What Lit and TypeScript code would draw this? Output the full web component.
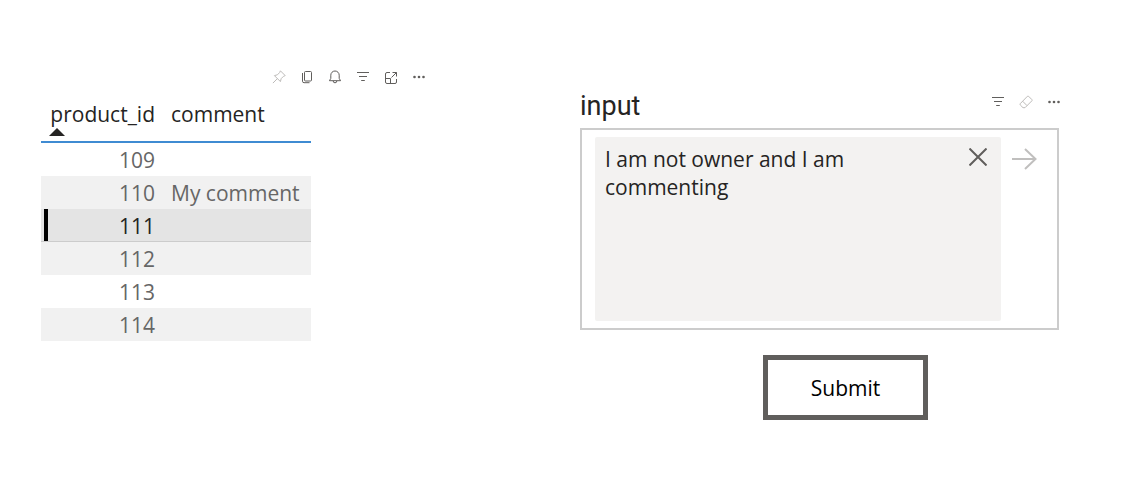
import { LitElement, html, css, svg } from "lit";
import { customElement, property, state } from "lit/decorators.js";
import { classMap } from "lit/directives/class-map.js";

const icons = {
  pin: svg`<path d="M8.4 .8 13.2 5.6 11.4 6.4 9.2 8.6 8.4 11.6 2.4 5.6 5.4 4.8 7.6 2.6ZM5.4 8.6 .9 13.1"/>`,
  copy: svg`<rect x="4.5" y="1.5" width="7" height="9.5" rx="1"/><path d="M2.5 3V11.2Q2.5 12.7 4 12.7H9.5"/>`,
  bell: svg`<path d="M1.4 10.7H12.6L11.2 8.4V5.2A4.2 4.2 0 0 0 2.8 5.2V8.4ZM5.2 11A1.8 1.8 0 0 0 8.8 11"/>`,
  filter: svg`<path d="M1 2.5H13M3 6.5H11M5.2 10.5H8.8"/>`,
  focus: svg`<path d="M6 2.5H3Q1.5 2.5 1.5 4V12Q1.5 13.5 3 13.5H11Q12.5 13.5 12.5 12V9M8.5 2.5H12.5V6.5M12.5 2.5 7.5 7.5M1.5 8.5H6.5V13.5"/>`,
  more: svg`<g fill="currentColor" stroke="none"><circle cx="2.5" cy="7" r="1.3"/><circle cx="7" cy="7" r="1.3"/><circle cx="11.5" cy="7" r="1.3"/></g>`,
  eraser: svg`<path d="M8.4 1.3Q9 .8 9.6 1.3L12.9 4.6Q13.4 5.2 12.9 5.8L6 12.7H4L1.3 10Q.8 9.4 1.3 8.6ZM3.6 6.2 8 10.6"/>`,
};
type IconName = keyof typeof icons;

interface Tool {
  icon: IconName;
  label: string;
  faded?: boolean;
}

@customElement("visual-toolbar")
export class VisualToolbar extends LitElement {
  @property({ attribute: false }) tools: Tool[] = [];

  static styles = css`
    :host {
      display: flex;
      gap: 14px;
    }
    button {
      display: block;
      width: 14px;
      height: 14px;
      padding: 0;
      border: 0;
      background: none;
      color: #605e5c;
      cursor: pointer;
    }
    .faded {
      color: #bdbbb9;
    }
    svg {
      display: block;
      fill: none;
      stroke: currentColor;
      stroke-width: 1;
    }
  `;

  render() {
    return this.tools.map(
      (t) => html`<button
        type="button"
        class=${classMap({ faded: !!t.faded })}
        aria-label=${t.label}
      >
        <svg width="14" height="14" viewBox="0 0 14 14">${icons[t.icon]}</svg>
      </button>`
    );
  }
}

@customElement("comment-table")
export class CommentTable extends LitElement {
  @state() private selected = 111;

  private rows = [
    { id: 109, comment: "" },
    { id: 110, comment: "My comment" },
    { id: 111, comment: "" },
    { id: 112, comment: "" },
    { id: 113, comment: "" },
    { id: 114, comment: "" },
  ];

  static styles = css`
    :host {
      display: block;
    }
    table {
      width: 70%;
      border-collapse: separate;
      border-spacing: 0;
      color: #666666;
      font-size: 21px;
      line-height: 28px;
    }
    th,
    td {
      box-sizing: border-box;
      height: 33px;
      padding: 0 8px;
      text-align: left;
      font-weight: 400;
      white-space: nowrap;
    }
    th {
      height: 49px;
      padding-top: 6px;
      vertical-align: top;
      color: #252423;
      border-bottom: 2px solid #3f8bd2;
    }
    .id {
      width: 122px;
      text-align: right;
    }
    .sort {
      display: block;
      width: 16px;
      height: 8px;
      fill: #252423;
    }
    .band td {
      background: #f1f1f1;
    }
    .selected td {
      background: #e4e4e4;
      color: #252423;
      box-shadow: inset 0 -1px #cccccc;
    }
    .selected .id {
      box-shadow: inset 0 -1px #cccccc, inset 3px 0 #e4e4e4, inset 7px 0 #000000;
    }
  `;

  render() {
    return html`<table>
      <thead>
        <tr>
          <th scope="col" class="id" aria-sort="ascending">
            product_id
            <svg class="sort" viewBox="0 0 16 8"><path d="M8 0 16 8H0Z" /></svg>
          </th>
          <th scope="col">comment</th>
        </tr>
      </thead>
      <tbody>
        ${this.rows.map(
          (r, i) => html`<tr
            class=${classMap({ band: i % 2 === 1, selected: r.id === this.selected })}
            @click=${() => (this.selected = r.id)}
          >
            <td class="id">${r.id}</td>
            <td>${r.comment}</td>
          </tr>`
        )}
      </tbody>
    </table>`;
  }
}

@customElement("comment-input")
export class CommentInput extends LitElement {
  @state() private value = "I am not owner and I am commenting";

  static styles = css`
    :host {
      display: block;
    }
    .frame {
      display: flex;
      align-items: flex-start;
      border: 2px solid #cccccc;
      padding: 7px 20px 7px 13px;
    }
    .field {
      position: relative;
      flex: 1;
      display: flex;
    }
    textarea {
      box-sizing: border-box;
      width: 100%;
      height: 184px;
      margin: 0;
      padding: 8px 48px 8px 10px;
      border: 0;
      border-radius: 2px;
      outline: 0;
      resize: none;
      background: #f3f2f1;
      color: #252423;
      font: inherit;
      font-size: 21px;
      line-height: 28px;
    }
    button {
      padding: 0;
      border: 0;
      background: none;
      cursor: pointer;
    }
    .clear {
      position: absolute;
      top: 11px;
      right: 14px;
      color: #605e5c;
    }
    .send {
      margin: 11px 0 0 10px;
      color: #c0bfbe;
    }
    svg {
      display: block;
      fill: none;
      stroke: currentColor;
      stroke-width: 2;
    }
  `;

  render() {
    return html`<div class="frame">
      <div class="field">
        <textarea
          aria-label="input"
          spellcheck="false"
          .value=${this.value}
          @input=${(e: Event) => (this.value = (e.target as HTMLTextAreaElement).value)}
        ></textarea>
        <button type="button" class="clear" aria-label="Clear" @click=${() => (this.value = "")}>
          <svg width="18" height="18" viewBox="0 0 18 18"><path d="M.5 .5 17.5 17.5M17.5 .5 .5 17.5" /></svg>
        </button>
      </div>
      <button type="button" class="send" aria-label="Send">
        <svg width="26" height="22" viewBox="0 0 26 22"><path d="M1 11H24.5M14 1 24.5 11 14 21" /></svg>
      </button>
    </div>`;
  }
}

@customElement("app-root")
export class AppRoot extends LitElement {
  private tableTools: Tool[] = [
    { icon: "pin", label: "Pin visual", faded: true },
    { icon: "copy", label: "Copy visual" },
    { icon: "bell", label: "Set alert" },
    { icon: "filter", label: "Filters" },
    { icon: "focus", label: "Focus mode" },
    { icon: "more", label: "More options" },
  ];
  private inputTools: Tool[] = [
    { icon: "filter", label: "Filters" },
    { icon: "eraser", label: "Clear selections", faded: true },
    { icon: "more", label: "More options" },
  ];

  static styles = css`
    :host {
      display: grid;
      grid-template-columns: 385fr 479fr;
      gap: 154px;
      align-items: start;
      padding: 70px 83px 48px 41px;
      background: #ffffff;
      font-family: "Segoe UI", "Open Sans", "Noto Sans", sans-serif;
    }
    .tools {
      justify-content: flex-end;
    }
    comment-table {
      margin-top: 10px;
    }
    .entry {
      padding-top: 20px;
    }
    header {
      display: flex;
      justify-content: space-between;
      height: 38px;
      margin-right: -2px;
    }
    .tools-input {
      margin-top: 5px;
    }
    h2 {
      margin: 0;
      color: #252423;
      font: 400 27px/32px Roboto, sans-serif;
    }
    .submit {
      display: block;
      box-sizing: border-box;
      width: 165px;
      height: 65px;
      margin: 25px 0 0 183px;
      padding: 0;
      border: 5px solid #605e5c;
      background: #ffffff;
      color: #000000;
      font: inherit;
      font-size: 21px;
      line-height: 28px;
      cursor: pointer;
    }
  `;

  render() {
    return html`
      <section>
        <visual-toolbar class="tools" .tools=${this.tableTools}></visual-toolbar>
        <comment-table></comment-table>
      </section>
      <section class="entry">
        <header>
          <h2>input</h2>
          <visual-toolbar class="tools-input" .tools=${this.inputTools}></visual-toolbar>
        </header>
        <comment-input></comment-input>
        <button type="button" class="submit">Submit</button>
      </section>
    `;
  }
}
